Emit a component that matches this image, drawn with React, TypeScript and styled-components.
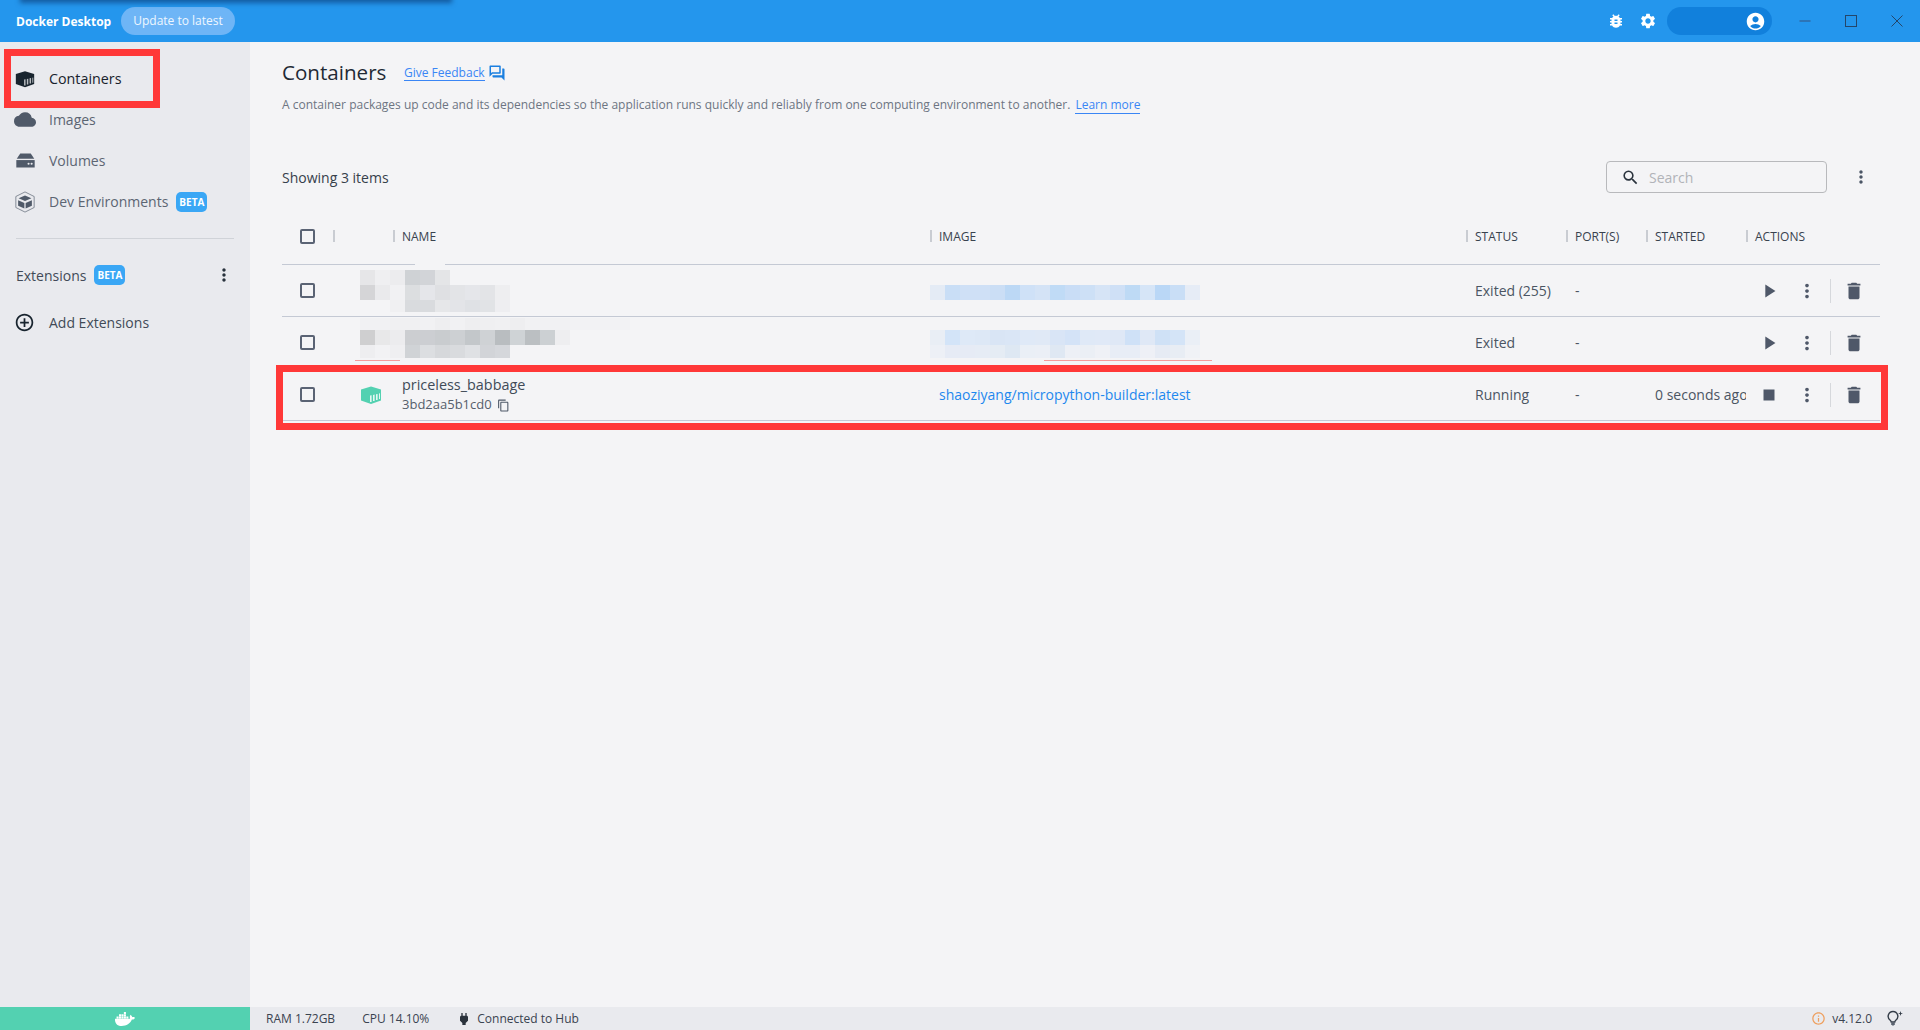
import React from 'react';
import styled, { createGlobalStyle } from 'styled-components';
import { FaDocker } from 'react-icons/fa';
import {
  MdAccountCircle,
  MdAddCircleOutline,
  MdBugReport,
  MdCloud,
  MdContentCopy,
  MdDelete,
  MdInfoOutline,
  MdMoreVert,
  MdOutlineForum,
  MdPlayArrow,
  MdPower,
  MdSearch,
  MdSettings,
  MdStop,
} from 'react-icons/md';

const GlobalStyle = createGlobalStyle`
  html, body {
    margin: 0;
    padding: 0;
    height: 100%;
    overflow: hidden;
    font-family: "Open Sans", "Liberation Sans", sans-serif;
    background: #f4f4f6;
  }
  * { box-sizing: border-box; }
`;

const Shell = styled.div`
  position: relative;
  width: 1920px;
  height: 1030px;
  display: flex;
  flex-direction: column;
  overflow: hidden;
`;

// Title bar
const TopBar = styled.header`
  position: relative;
  flex: 0 0 42px;
  display: flex;
  align-items: center;
  padding-left: 16px;
  background: #2496ed;
  color: #fff;
`;

const TopShadow = styled.div`
  position: absolute;
  left: 22px;
  top: -4px;
  width: 428px;
  height: 4px;
  box-shadow: 0 1px 5px 2px rgba(10, 60, 120, 0.65);
`;

const Brand = styled.span`
  font-size: 12px;
  font-weight: 700;
  width: 105px;
`;

const UpdateButton = styled.span`
  width: 114px;
  height: 28px;
  border-radius: 14px;
  background: #6eb5f6;
  color: #eef7ff;
  font-size: 12px;
  line-height: 28px;
  text-align: center;
`;

const TopRight = styled.div`
  margin-left: auto;
  display: flex;
  align-items: center;
`;

const TopIcon = styled.span`
  width: 32px;
  height: 32px;
  display: flex;
  align-items: center;
  justify-content: center;
  font-size: 18px;
`;

const AccountPill = styled.div`
  width: 105px;
  height: 28px;
  margin-left: 3px;
  padding-right: 6px;
  border-radius: 14px;
  background: #1180dc;
  display: flex;
  align-items: center;
  justify-content: flex-end;
  font-size: 21px;
`;

const WindowControls = styled.div`
  display: flex;
  margin-left: 10px;
`;

const WindowButton = styled.span`
  width: 46px;
  height: 42px;
  display: flex;
  align-items: center;
  justify-content: center;
`;

const Body = styled.div`
  flex: 1;
  min-height: 0;
  display: flex;
`;

// Left navigation
const Sidebar = styled.nav`
  flex: 0 0 250px;
  background: #e9eaee;
  padding-top: 16px;
`;

const NavItem = styled.div<{ $active?: boolean }>`
  height: 41px;
  padding-left: 14px;
  display: flex;
  align-items: center;
  font-size: ${({ $active }) => ($active ? '14.3px' : '14px')};
  font-weight: ${({ $active }) => ($active ? 500 : 400)};
  color: ${({ $active }) => ($active ? '#18222c' : '#5c6573')};
`;

const NavIcon = styled.span<{ $active?: boolean }>`
  width: 22px;
  height: 22px;
  margin-right: 13px;
  display: flex;
  align-items: center;
  justify-content: center;
  color: ${({ $active }) => ($active ? '#18242e' : '#505a69')};
`;

const Beta = styled.span`
  margin-left: 8px;
  width: 31px;
  height: 20px;
  border-radius: 5px;
  background: #3aa7f5;
  color: #fff;
  font-size: 10px;
  font-weight: 700;
  line-height: 20px;
  text-align: center;
`;

const NavDivider = styled.hr`
  margin: 16px 16px 0;
  border: 0;
  border-top: 1px solid #d0d3d8;
`;

const ExtensionsRow = styled.div`
  height: 24px;
  margin-top: 24px;
  padding: 0 16px;
  display: flex;
  align-items: center;
  font-size: 14px;
  color: #414a57;
`;

const NavKebab = styled.span`
  margin-left: auto;
  display: flex;
  font-size: 20px;
  color: #28323c;
`;

const AddRow = styled(NavItem)`
  margin-top: 15px;
  padding-left: 13px;
  color: #414a57;
`;

const AddIcon = styled(NavIcon)`
  margin-right: 14px;
`;

const Main = styled.main`
  flex: 1;
  min-width: 0;
  padding: 16px 40px 0 32px;
  background: #f4f4f6;
`;

const TitleRow = styled.div`
  height: 28px;
  display: flex;
  align-items: center;
`;

const Title = styled.h1`
  width: 122px;
  margin: 0;
  font-size: 20.6px;
  font-weight: 500;
  color: #1f2a35;
`;

const FeedbackLink = styled.a`
  margin-top: 2px;
  font-size: 12px;
  line-height: 15px;
  color: #3a86f5;
  border-bottom: 1px solid #3a86f5;
`;

const FeedbackIcon = styled.span`
  margin-left: 3px;
  margin-top: 1px;
  display: flex;
  font-size: 18px;
  color: #1a7fe0;
`;

const Description = styled.p`
  margin: 10px 0 0;
  font-size: 12px;
  line-height: 18px;
  color: #6d7582;
`;

const LearnMore = styled.a`
  margin-left: 5px;
  color: #3a86f5;
  border-bottom: 1px solid #3a86f5;
`;

const Toolbar = styled.div`
  height: 32px;
  margin-top: 47px;
  display: flex;
  align-items: center;
`;

const Count = styled.span`
  font-size: 14px;
  color: #36404b;
`;

const SearchBox = styled.div`
  width: 221px;
  height: 32px;
  margin-left: auto;
  padding-left: 14px;
  border: 1px solid #b8b9bc;
  border-radius: 4px;
  display: flex;
  align-items: center;
  gap: 9px;
  font-size: 14px;
  color: #b1b3b8;
`;

const SearchGlyph = styled.span`
  display: flex;
  font-size: 19px;
  color: #2a333d;
`;

const ToolbarKebab = styled.span`
  width: 44px;
  margin-left: 12px;
  margin-right: -3px;
  display: flex;
  justify-content: center;
  font-size: 20px;
  color: #4b5565;
`;

// Table
const columns = '51px 60px 537px 536px 100px 80px 100px 134px';

const HeaderRow = styled.div`
  margin-top: 20px;
  height: 52px;
  padding-bottom: 5px;
  display: grid;
  grid-template-columns: ${columns};
  align-items: center;
  border-bottom: 1px solid #c4c9d4;
`;

const HeaderCell = styled.div`
  height: 12px;
  padding-left: 7px;
  border-left: 2px solid #c9ccd2;
  display: flex;
  align-items: center;
  font-size: 12px;
  font-weight: 500;
  color: #39424e;
  text-transform: uppercase;
`;

const Row = styled.div`
  position: relative;
  height: 52px;
  display: grid;
  grid-template-columns: ${columns};
  align-items: center;
  border-bottom: 1px solid #c4c9d4;
`;

const CheckCell = styled.div`
  padding-left: 18px;
`;

const CheckBox = styled.span`
  display: block;
  width: 15px;
  height: 15px;
  border: 2px solid #5a6374;
  border-radius: 2px;
`;

const IconCell = styled.div`
  padding-left: 26px;
  display: flex;
`;

const NameCell = styled.div`
  padding-left: 9px;
  margin-top: -1px;
`;

const ContainerName = styled.div`
  font-size: 14.4px;
  line-height: 20px;
  font-weight: 500;
  color: #414b58;
`;

const ContainerId = styled.div`
  display: flex;
  align-items: center;
  font-size: 13px;
  line-height: 18px;
  color: #555e6b;
`;

const CopyGlyph = styled.span`
  margin-left: 5px;
  margin-top: 2px;
  display: flex;
  font-size: 13px;
  color: #4f5968;
`;

const ImageCell = styled.a`
  padding-left: 9px;
  font-size: 14px;
  color: #1e88ee;
`;

const TextCell = styled.div`
  padding-left: 9px;
  font-size: 14px;
  color: #4b5563;
  white-space: nowrap;
  overflow: hidden;
`;

const ActionsCell = styled.div`
  height: 24px;
  padding-left: 4px;
  display: flex;
  align-items: center;
`;

const ActionButton = styled.span`
  width: 38px;
  display: flex;
  justify-content: center;
  font-size: 22px;
  color: #4f5869;
`;

const ActionDivider = styled.span`
  width: 1px;
  height: 24px;
  margin: 0 4px;
  background: #d6d8dc;
`;

// Overlays that sit on top of the screenshot: blur mosaics and red marker boxes
const Mosaic = styled.div<{ $left: number; $top: number }>`
  position: absolute;
  left: ${({ $left }) => $left}px;
  top: ${({ $top }) => $top}px;
  display: flex;
  flex-direction: column;
`;

const MosaicRow = styled.div<{ $height: number }>`
  display: flex;
  height: ${({ $height }) => $height}px;
`;

const Tile = styled.span<{ $color: string }>`
  width: 15px;
  background: ${({ $color }) => $color};
`;

const MarkerBox = styled.div<{ $left: number; $top: number; $width: number; $height: number }>`
  position: absolute;
  left: ${({ $left }) => $left}px;
  top: ${({ $top }) => $top}px;
  width: ${({ $width }) => $width}px;
  height: ${({ $height }) => $height}px;
  border: 7px solid #ff3838;
`;

const Scribble = styled.div<{ $left: number; $width: number }>`
  position: absolute;
  left: ${({ $left }) => $left}px;
  top: 360px;
  width: ${({ $width }) => $width}px;
  height: 1px;
  background: #f59a9a;
`;

// Status bar
const StatusBar = styled.footer`
  flex: 0 0 23px;
  display: flex;
  align-items: center;
  background: #e9eaee;
  font-size: 12px;
  color: #3a4350;
`;

const EngineBlock = styled.div`
  width: 250px;
  height: 100%;
  background: #53d1b1;
  display: flex;
  align-items: center;
  justify-content: center;
  font-size: 20px;
  color: #fff;
`;

const StatusItem = styled.span<{ $gap: number }>`
  margin-left: ${({ $gap }) => $gap}px;
  display: flex;
  align-items: center;
`;

const PlugGlyph = styled.span`
  margin-right: 5px;
  display: flex;
  font-size: 16px;
  color: #2b333c;
`;

const StatusRight = styled.div`
  margin-left: auto;
  padding-right: 16px;
  display: flex;
  align-items: center;
`;

const VersionInfo = styled.span`
  margin-right: 6px;
  display: flex;
  font-size: 15px;
  color: #ee9f5e;
`;

const BulbGlyph = styled.span`
  margin-left: 15px;
  display: flex;
`;

// Docker's cargo box, used for the Containers nav item and the running row
const ContainerIcon: React.FC<{ size: number; color: string; slat: string }> = ({ size, color, slat }) => (
  <svg width={size} height={size} viewBox="0 0 24 24">
    <path d="M12 3.5 22 6.5V17.5L12 21 2 17.5V6.5Z" fill={color} />
    <path d="M11 12.5 12.6 12.2V19H11ZM14 12 15.6 11.6V18H14ZM17 11.3 18.6 10.9V17H17ZM20 10.6 21 10.3V16H20Z" fill={slat} />
  </svg>
);

const VolumeIcon: React.FC = () => (
  <svg width="21" height="21" viewBox="0 0 24 24" fill="currentColor">
    <path d="M6 4H18L22 10H2Z" />
    <path d="M1.5 11.5H22.5V20H1.5Z" />
    <circle cx="15.5" cy="15.7" r="1.2" fill="#e9eaee" />
    <circle cx="19" cy="15.7" r="1.2" fill="#e9eaee" />
  </svg>
);

const DevEnvIcon: React.FC = () => (
  <svg width="22" height="22" viewBox="0 0 24 24" fill="currentColor">
    <path d="M12 5 19 8 12 11 5 8Z" />
    <path d="M4.5 10 11.3 13V19L4.5 16ZM19.5 10 12.7 13V19L19.5 16Z" />
    <path d="M12 1 22 6V18L12 23 2 18V6Z" fill="none" stroke="currentColor" strokeWidth="1" opacity="0.7" />
  </svg>
);

const MinimizeIcon: React.FC = () => (
  <svg width="12" height="12" viewBox="0 0 12 12">
    <path d="M0.5 6H11.5" stroke="#2f6ba8" strokeWidth="1.6" />
  </svg>
);

const MaximizeIcon: React.FC = () => (
  <svg width="12" height="12" viewBox="0 0 12 12">
    <rect x="0.5" y="0.5" width="11" height="11" fill="none" stroke="#24466a" strokeWidth="1" />
  </svg>
);

const CloseIcon: React.FC = () => (
  <svg width="12" height="12" viewBox="0 0 12 12">
    <path d="M0.5 0.5 11.5 11.5M11.5 0.5 0.5 11.5" stroke="#24466a" strokeWidth="1" />
  </svg>
);

const BulbIcon: React.FC = () => (
  <svg width="17" height="17" viewBox="0 0 17 17" fill="none">
    <path d="M6 1.5A4.8 4.8 0 0 0 3.2 10.2C4 10.9 4.1 11.4 4.2 12H7.8C7.9 11.4 8 10.9 8.8 10.2A4.8 4.8 0 0 0 6 1.5Z" stroke="#343d48" strokeWidth="1.4" />
    <path d="M4.2 12.6H7.8V14.2L6.8 15.4H5.2L4.2 14.2Z" fill="#5a6370" />
    <path d="M13.5 1 14.1 2.9 16 3.5 14.1 4.1 13.5 6 12.9 4.1 11 3.5 12.9 2.9Z" fill="#343d48" />
  </svg>
);

const nameMosaicA = [
  ['#e6e6e8', '#efeff1', '#ececee', '#cfd2d5', '#d2d4d8', '#e4e5e7'],
  ['#d5d5d7', '#eaeaec', '#f1f1f3', '#dcdee0', '#e5e6ea', '#dfe0e3', '#e3e4e7', '#e5e6ea', '#e3e4e7', '#eeeef0'],
  ['#f4f4f6', '#f4f4f6', '#f0f0f2', '#d9dbde', '#d9dbde', '#e6e7e9', '#e3e4e8', '#dfe1e5', '#e1e3e6', '#eeeef1'],
];

const nameMosaicB = [
  ['#f1f1f3', '#f1f1f3', '#f0f0f2', '#f0f0f2', '#f1f1f3', '#eeeef0', '#f1f1f3', '#eeeef0', '#efeff1', '#f0f0f2', '#eeeef0', '#f1f1f3', '#f1f1f3', '#f1f1f3', '#f2f2f4', '#f2f2f4', '#f2f2f4', '#f2f2f4'],
  ['#cfcfd0', '#e8e8e9', '#ececee', '#ccced1', '#ccced2', '#c9cccf', '#cdd0d3', '#c3c7ca', '#cfd2d5', '#b9bdc0', '#cfd3d6', '#bbbfc2', '#ccd0d3', '#eeeef0'],
  ['#eeeef0', '#f2f2f4', '#efeff1', '#d0d3d6', '#dcdee1', '#d6d8db', '#d9dbde', '#dfe1e4', '#d2d4d8', '#d5d7db'],
];

const imageMosaicA = [
  ['#e4ebf5', '#c9def6', '#cfe0f6', '#cfe0f6', '#cbdef5', '#bcd8f5', '#cfe1f7', '#d4e3f6', '#c0dbf6', '#c9ddf6', '#cde0f6', '#d6e4f6', '#cfe0f6', '#bedaf5', '#d6e5f7', '#bad7f6', '#c9def6', '#e6ecf6'],
];

const imageMosaicB = [
  ['#e9eef5', '#d3e4f8', '#dee9f7', '#dde8f6', '#d9e5f5', '#dae6f6', '#dfe9f7', '#e0e9f6', '#d9e5f6', '#d4e3f7', '#dfe9f7', '#e0e9f7', '#dfe8f6', '#cfe1f7', '#dfe8f6', '#cfe1f6', '#d4e4f7', '#eaeff6'],
  ['#edf0f6', '#e6ebf5', '#e6ebf5', '#e6ecf5', '#e5ecf4', '#dee8f3', '#eaeff6', '#ebeff6', '#dfe8f3', '#edf0f6', '#ebeff5', '#eff1f6', '#e8edf6', '#e8edf6', '#eef0f6', '#e6ebf4', '#e8edf4', '#f0f2f6'],
];

const renderMosaic = (left: number, top: number, rows: string[][], heights: number[]) => (
  <Mosaic $left={left} $top={top}>
    {rows.map((row, r) => (
      <MosaicRow key={r} $height={heights[r]}>
        {row.map((c, i) => (
          <Tile key={i} $color={c} />
        ))}
      </MosaicRow>
    ))}
  </Mosaic>
);

const Actions: React.FC<{ running?: boolean }> = ({ running }) => (
  <ActionsCell>
    <ActionButton>{running ? <MdStop /> : <MdPlayArrow />}</ActionButton>
    <ActionButton><MdMoreVert /></ActionButton>
    <ActionDivider />
    <ActionButton><MdDelete /></ActionButton>
  </ActionsCell>
);

const App: React.FC = () => {
  return (
    <Shell>
      <GlobalStyle />
      <TopBar>
        <TopShadow />
        <Brand>Docker Desktop</Brand>
        <UpdateButton>Update to latest</UpdateButton>
        <TopRight>
          <TopIcon><MdBugReport /></TopIcon>
          <TopIcon><MdSettings /></TopIcon>
          <AccountPill><MdAccountCircle /></AccountPill>
          <WindowControls>
            <WindowButton><MinimizeIcon /></WindowButton>
            <WindowButton><MaximizeIcon /></WindowButton>
            <WindowButton><CloseIcon /></WindowButton>
          </WindowControls>
        </TopRight>
      </TopBar>

      <Body>
        <Sidebar>
          <NavItem $active>
            <NavIcon $active><ContainerIcon size={22} color="#18242e" slat="#b9bcc0" /></NavIcon>
            Containers
          </NavItem>
          <NavItem>
            <NavIcon><MdCloud size={23} /></NavIcon>
            Images
          </NavItem>
          <NavItem>
            <NavIcon><VolumeIcon /></NavIcon>
            Volumes
          </NavItem>
          <NavItem>
            <NavIcon><DevEnvIcon /></NavIcon>
            Dev Environments
            <Beta>BETA</Beta>
          </NavItem>
          <NavDivider />
          <ExtensionsRow>
            Extensions
            <Beta>BETA</Beta>
            <NavKebab><MdMoreVert /></NavKebab>
          </ExtensionsRow>
          <AddRow>
            <AddIcon $active><MdAddCircleOutline size={21} /></AddIcon>
            Add Extensions
          </AddRow>
        </Sidebar>

        <Main>
          <TitleRow>
            <Title>Containers</Title>
            <FeedbackLink>Give Feedback</FeedbackLink>
            <FeedbackIcon><MdOutlineForum /></FeedbackIcon>
          </TitleRow>
          <Description>
            A container packages up code and its dependencies so the application runs quickly and reliably from one computing environment to another.
            <LearnMore>Learn more</LearnMore>
          </Description>
          <Toolbar>
            <Count>Showing 3 items</Count>
            <SearchBox>
              <SearchGlyph><MdSearch /></SearchGlyph>
              Search
            </SearchBox>
            <ToolbarKebab><MdMoreVert /></ToolbarKebab>
          </Toolbar>

          <HeaderRow>
            <CheckCell><CheckBox /></CheckCell>
            <HeaderCell />
            <HeaderCell>Name</HeaderCell>
            <HeaderCell>Image</HeaderCell>
            <HeaderCell>Status</HeaderCell>
            <HeaderCell>Port(s)</HeaderCell>
            <HeaderCell>Started</HeaderCell>
            <HeaderCell>Actions</HeaderCell>
          </HeaderRow>

          <Row>
            <CheckCell><CheckBox /></CheckCell>
            <IconCell />
            <NameCell />
            <ImageCell />
            <TextCell>Exited (255)</TextCell>
            <TextCell>-</TextCell>
            <TextCell />
            <Actions />
          </Row>
          <Row>
            <CheckCell><CheckBox /></CheckCell>
            <IconCell />
            <NameCell />
            <ImageCell />
            <TextCell>Exited</TextCell>
            <TextCell>-</TextCell>
            <TextCell />
            <Actions />
          </Row>
          <Row>
            <CheckCell><CheckBox /></CheckCell>
            <IconCell><ContainerIcon size={24} color="#53d1b1" slat="#e4f7f2" /></IconCell>
            <NameCell>
              <ContainerName>priceless_babbage</ContainerName>
              <ContainerId>
                3bd2aa5b1cd0
                <CopyGlyph><MdContentCopy /></CopyGlyph>
              </ContainerId>
            </NameCell>
            <ImageCell>shaoziyang/micropython-builder:latest</ImageCell>
            <TextCell>Running</TextCell>
            <TextCell>-</TextCell>
            <TextCell>0 seconds ago</TextCell>
            <Actions running />
          </Row>
        </Main>
      </Body>

      <StatusBar>
        <EngineBlock><FaDocker /></EngineBlock>
        <StatusItem $gap={16}>RAM 1.72GB</StatusItem>
        <StatusItem $gap={27}>CPU 14.10%</StatusItem>
        <StatusItem $gap={27}>
          <PlugGlyph><MdPower /></PlugGlyph>
          Connected to Hub
        </StatusItem>
        <StatusRight>
          <VersionInfo><MdInfoOutline /></VersionInfo>
          v4.12.0
          <BulbGlyph><BulbIcon /></BulbGlyph>
        </StatusRight>
      </StatusBar>

      {renderMosaic(415, 264, [['#f4f4f6', '#f4f4f6']], [1])}
      {renderMosaic(360, 270, nameMosaicA, [15, 15, 12])}
      {renderMosaic(360, 318, nameMosaicB, [12, 15, 13])}
      {renderMosaic(930, 285, imageMosaicA, [15])}
      {renderMosaic(930, 330, imageMosaicB, [15, 13])}
      <Scribble $left={355} $width={45} />
      <Scribble $left={1044} $width={168} />

      <MarkerBox $left={4} $top={49} $width={156} $height={59} />
      <MarkerBox $left={276} $top={365} $width={1612} $height={65} />
    </Shell>
  );
};

export default App;
